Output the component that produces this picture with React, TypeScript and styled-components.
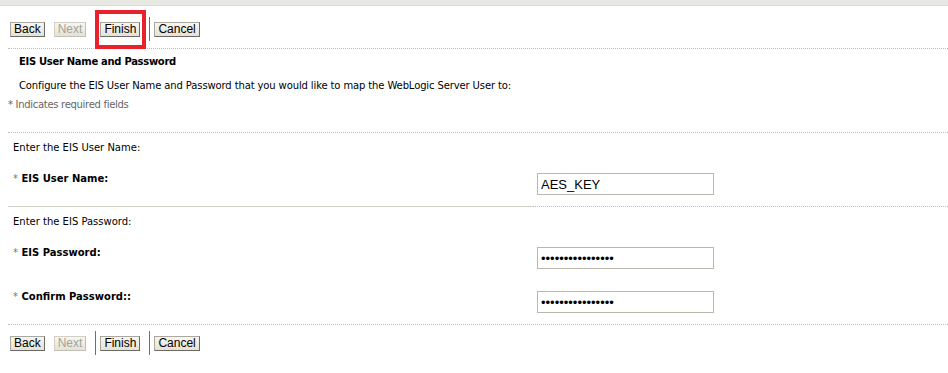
import React from 'react';
import styled, { createGlobalStyle } from 'styled-components';

const Global = createGlobalStyle`
    html, body {
        margin: 0;
        padding: 0;
        background: #fff;
    }
    body {
        font-family: "DejaVu Sans", Tahoma, sans-serif;
        font-size: 10px;
        color: #000;
    }
`;

function ButtonBar({ highlight, top }: { highlight?: boolean; top: number }) {
    return (
        <Bar $top={top}>
            <Btn>Back</Btn>
            <Btn disabled>Next</Btn>
            <Sep />
            <FinishWrap>
                <Btn>Finish</Btn>
                {highlight && <RedBox />}
            </FinishWrap>
            <Sep />
            <Btn>Cancel</Btn>
        </Bar>
    );
}

function App() {
    return (
        <Wrap>
            <Global />
            <TopStrip />
            <ButtonBar highlight top={11} />
            <Dotted $top={7} />
            <Title>EIS User Name and Password</Title>
            <Intro>Configure the EIS User Name and Password that you would like to map the WebLogic Server User to:</Intro>
            <Required>* Indicates required fields</Required>
            <Dotted $top={20} />
            <Section>
                <Hint>Enter the EIS User Name:</Hint>
                <Row $top={17}>
                    <Label><Star>*</Star> EIS User Name:</Label>
                    <Field defaultValue="AES_KEY" />
                </Row>
            </Section>
            <Split>
                <Solid />
                <DotPart />
            </Split>
            <Section>
                <Hint>Enter the EIS Password:</Hint>
                <Row $top={17}>
                    <Label><Star>*</Star> EIS Password:</Label>
                    <Field type="password" defaultValue="aaaaaaaaaaaaaaaa" />
                </Row>
                <Row $top={21}>
                    <Label><Star>*</Star> Confirm Password::</Label>
                    <Field type="password" defaultValue="aaaaaaaaaaaaaaaa" />
                </Row>
            </Section>
            <Dotted $top={11} />
            <ButtonBar top={6} />
        </Wrap>
    );
}

const Wrap = styled.div`
    width: 948px;
    height: 373px;
    overflow: hidden;
`;

const TopStrip = styled.div`
    height: 5px;
    background: #e8e8e3;
    border-bottom: 1px solid #dcdcd4;
`;

const Bar = styled.div<{ $top: number }>`
    display: flex;
    align-items: center;
    height: 24px;
    margin-top: ${p => p.$top}px;
    padding-left: 10px;
`;

const Btn = styled.button`
    box-sizing: border-box;
    font-family: "Liberation Sans", Arial, sans-serif;
    font-size: 12px;
    line-height: 13px;
    height: 15px;
    padding: 0 3px;
    margin: 0 9px 0 0;
    color: ${p => (p.disabled ? '#a3a39a' : '#000')};
    background: linear-gradient(#f7f6f0, #e4e2d7);
    border: 1px solid ${p => (p.disabled ? '#d2d0c6' : '#a9a89e')};
    border-right-color: ${p => (p.disabled ? '#c2c0b6' : '#6a6963')};
    border-bottom-color: ${p => (p.disabled ? '#c2c0b6' : '#6a6963')};
`;

const Sep = styled.span`
    width: 1px;
    height: 24px;
    background: #6f6f6f;
    margin-right: 4px;
`;

const FinishWrap = styled.span`
    position: relative;
    display: inline-flex;
`;

const RedBox = styled.span`
    position: absolute;
    left: -5px;
    top: -12px;
    right: 3px;
    bottom: -12px;
    border: 4px solid #e8212a;
    pointer-events: none;
`;

const Dotted = styled.div<{ $top: number }>`
    margin: ${p => p.$top}px 0 0 8px;
    border-top: 1px dotted #bdbdbd;
`;

const Title = styled.div`
    font-weight: bold;
    letter-spacing: -0.3px;
    padding: 6px 0 0 19px;
    line-height: 14px;
`;

const Intro = styled.div`
    padding: 10px 0 0 19px;
    letter-spacing: -0.12px;
    line-height: 14px;
`;

const Required = styled.div`
    padding: 5px 0 0 8px;
    color: #666;
    letter-spacing: -0.3px;
    line-height: 14px;
`;

const Section = styled.div`
    padding: 8px 0 0 13px;
`;

const Hint = styled.div`
    line-height: 14px;
`;

const Row = styled.div<{ $top: number }>`
    display: flex;
    align-items: flex-start;
    margin-top: ${p => p.$top}px;
`;

const Label = styled.div`
    width: 524px;
    font-weight: bold;
    line-height: 14px;
`;

const Star = styled.span`
    color: #777;
    font-weight: normal;
`;

const Field = styled.input`
    box-sizing: border-box;
    width: 177px;
    height: 22px;
    margin: 1px 0 0 0;
    padding: 1px 3px;
    border: 1px solid #b9b8ac;
    font-family: "Liberation Sans", Arial, sans-serif;
    font-size: 13px;
    color: #000;
    outline: none;
`;

const Split = styled.div`
    display: flex;
    margin: 11px 0 0 8px;
`;

const Solid = styled.div`
    width: 525px;
    border-top: 1px solid #cfcfc6;
`;

const DotPart = styled.div`
    flex: 1;
    border-top: 1px dotted #bdbdbd;
`;

export default App;
